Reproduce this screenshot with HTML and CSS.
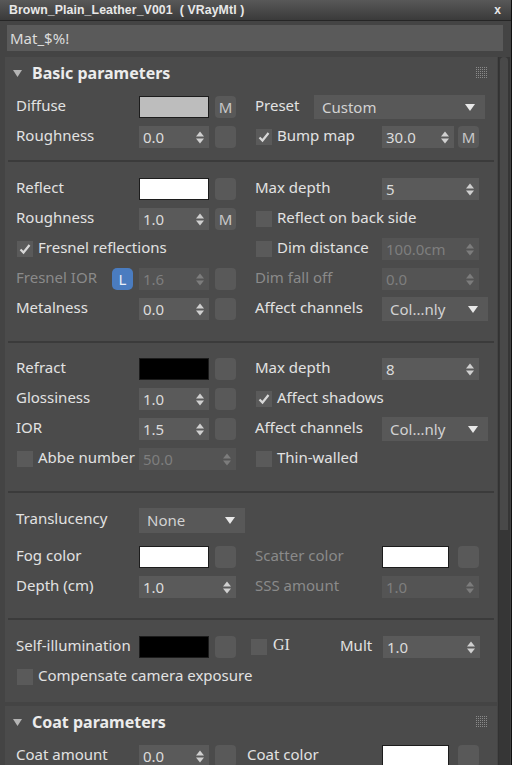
FILE: index.html
```html
<!DOCTYPE html>
<html>
<head>
<meta charset="utf-8">
<link rel="stylesheet" href="styles.css">
</head>
<body>
<svg class="defs" width="0" height="0">
  <defs>
    <symbol id="ud" viewBox="0 0 8 13"><path d="M0 5.5L4 0.5L8 5.5Z M0 7.5H8L4 12.5Z"/></symbol>
    <symbol id="dn" viewBox="0 0 10 7"><path d="M0 0H10L5 7Z"/></symbol>
    <symbol id="ck" viewBox="0 0 16 16"><path d="M3.5 8.5L6.5 11.5L12.5 4" fill="none" stroke-width="2.2"/></symbol>
    <symbol id="tri" viewBox="0 0 9 7"><path d="M0 0H9L4.5 7Z"/></symbol>
  </defs>
</svg>
<div class="win">
  <div class="title"><span>Brown_Plain_Leather_V001&nbsp; ( VRayMtl )</span><span class="close">x</span></div>
  <div class="name">Mat_$%!</div>
  <div class="main">
    <div class="panels">
      <div class="panel">
        <div class="phead"><svg class="tri"><use href="#tri"/></svg><span class="ptitle">Basic parameters</span><span class="grip"></span></div>

        <div class="sec s1">
          <div class="row">
            <div class="lc"><span class="lbl">Diffuse</span><span class="sw grey"></span><span class="mb">M</span></div>
            <div class="rc"><span class="plbl">Preset</span><span class="dd preset"><span>Custom</span><svg class="dna"><use href="#dn"/></svg></span></div>
          </div>
          <div class="row">
            <div class="lc"><span class="lbl">Roughness</span><span class="spin"><span>0.0</span><svg class="ud"><use href="#ud"/></svg></span><span class="mb"></span></div>
            <div class="rc"><span class="rlbl"><span class="cb"><svg><use href="#ck"/></svg></span>Bump map</span><span class="spin bump"><span>30.0</span><svg class="ud"><use href="#ud"/></svg></span><span class="mb mbr">M</span></div>
          </div>
        </div>

        <div class="sec s2">
          <div class="row">
            <div class="lc"><span class="lbl">Reflect</span><span class="sw white"></span><span class="mb"></span></div>
            <div class="rc"><span class="rlbl">Max depth</span><span class="spin wide"><span>5</span><svg class="ud"><use href="#ud"/></svg></span></div>
          </div>
          <div class="row">
            <div class="lc"><span class="lbl">Roughness</span><span class="spin"><span>1.0</span><svg class="ud"><use href="#ud"/></svg></span><span class="mb">M</span></div>
            <div class="rc"><span class="rlbl full"><span class="cb"></span>Reflect on back side</span></div>
          </div>
          <div class="row">
            <div class="lc"><span class="lbl full"><span class="cb first"><svg><use href="#ck"/></svg></span>Fresnel reflections</span></div>
            <div class="rc"><span class="rlbl"><span class="cb"></span>Dim distance</span><span class="spin wide dis"><span>100.0cm</span><svg class="ud"><use href="#ud"/></svg></span></div>
          </div>
          <div class="row">
            <div class="lc"><span class="lbl dis">Fresnel IOR<span class="lbtn">L</span></span><span class="spin dis"><span>1.6</span><svg class="ud"><use href="#ud"/></svg></span><span class="mb"></span></div>
            <div class="rc"><span class="rlbl dis">Dim fall off</span><span class="spin wide dis"><span>0.0</span><svg class="ud"><use href="#ud"/></svg></span></div>
          </div>
          <div class="row">
            <div class="lc"><span class="lbl">Metalness</span><span class="spin"><span>0.0</span><svg class="ud"><use href="#ud"/></svg></span><span class="mb"></span></div>
            <div class="rc"><span class="rlbl">Affect channels</span><span class="dd chan"><span>Col...nly</span><svg class="dna"><use href="#dn"/></svg></span></div>
          </div>
        </div>

        <div class="sec s3">
          <div class="row">
            <div class="lc"><span class="lbl">Refract</span><span class="sw black"></span><span class="mb"></span></div>
            <div class="rc"><span class="rlbl">Max depth</span><span class="spin wide"><span>8</span><svg class="ud"><use href="#ud"/></svg></span></div>
          </div>
          <div class="row">
            <div class="lc"><span class="lbl">Glossiness</span><span class="spin"><span>1.0</span><svg class="ud"><use href="#ud"/></svg></span><span class="mb"></span></div>
            <div class="rc"><span class="rlbl full"><span class="cb"><svg><use href="#ck"/></svg></span>Affect shadows</span></div>
          </div>
          <div class="row">
            <div class="lc"><span class="lbl">IOR</span><span class="spin"><span>1.5</span><svg class="ud"><use href="#ud"/></svg></span><span class="mb"></span></div>
            <div class="rc"><span class="rlbl">Affect channels</span><span class="dd chan"><span>Col...nly</span><svg class="dna"><use href="#dn"/></svg></span></div>
          </div>
          <div class="row">
            <div class="lc"><span class="lbl"><span class="cb first"></span>Abbe number</span><span class="spin wide dis"><span>50.0</span><svg class="ud"><use href="#ud"/></svg></span></div>
            <div class="rc"><span class="rlbl full"><span class="cb"></span>Thin-walled</span></div>
          </div>
        </div>

        <div class="sec s4">
          <div class="row">
            <div class="lc"><span class="lbl">Translucency</span><span class="dd none"><span>None</span><svg class="dna"><use href="#dn"/></svg></span></div>
            <div class="rc"></div>
          </div>
          <div class="row fog">
            <div class="lc"><span class="lbl">Fog color</span><span class="sw white"></span><span class="mb"></span></div>
            <div class="rc"><span class="rlbl dis">Scatter color</span><span class="sw white rsw"></span><span class="mb mbr2"></span></div>
          </div>
          <div class="row">
            <div class="lc"><span class="lbl">Depth (cm)</span><span class="spin wide"><span>1.0</span><svg class="ud"><use href="#ud"/></svg></span></div>
            <div class="rc"><span class="rlbl dis">SSS amount</span><span class="spin wide dis"><span>1.0</span><svg class="ud"><use href="#ud"/></svg></span></div>
          </div>
        </div>

        <div class="sec s5">
          <div class="row">
            <div class="lc self"><span class="lbl">Self-illumination</span><span class="sw black"></span><span class="mb"></span></div>
            <div class="rc"><span class="cb"></span><span class="gi">GI</span><span class="mult">Mult</span><span class="spin wide"><span>1.0</span><svg class="ud"><use href="#ud"/></svg></span></div>
          </div>
          <div class="row">
            <div class="lc"><span class="lbl full"><span class="cb first"></span>Compensate camera exposure</span></div>
            <div class="rc"></div>
          </div>
        </div>
      </div>

      <div class="panel coat">
        <div class="phead"><svg class="tri"><use href="#tri"/></svg><span class="ptitle">Coat parameters</span><span class="grip"></span></div>
        <div class="sec s6">
          <div class="row">
            <div class="lc coatl"><span class="lbl">Coat amount</span><span class="spin"><span>0.0</span><svg class="ud"><use href="#ud"/></svg></span><span class="mb"></span></div>
            <div class="rc"><span class="rlbl coatr">Coat color</span><span class="sw white rsw"></span><span class="mb mbr2"></span></div>
          </div>
        </div>
      </div>
    </div>
    <div class="scroll"><div class="thumb"></div></div>
  </div>
</div>
</body>
</html>
```

FILE: styles.css
```css
html, body {
  margin: 0;
  padding: 0;
  background: #444444;
}
.defs { position: absolute; width: 0; height: 0; }
.win {
  width: 511px;
  height: 765px;
  overflow: hidden;
  border-right: 1px solid #111;
  font-family: "Noto Sans", "Open Sans", sans-serif;
  font-size: 15px;
  color: #e2e2e2;
  background: #444444;
}
.title {
  height: 20px;
  border-bottom: 1px solid #262626;
  background: linear-gradient(#585858, #3a3a3a);
  display: flex;
  align-items: center;
  justify-content: space-between;
  padding: 0 10px 0 9px;
  font: bold 12.3px "Liberation Sans", Arial, sans-serif;
  letter-spacing: 0.1px;
  color: #e8e8e8;
}
.close { font-size: 12px; }
.name {
  margin: 4px 8px 0 7px;
  height: 26px;
  line-height: 26px;
  background: #5a5a5a;
  padding-left: 3px;
  color: #dcdcdc;
}
.main {
  display: flex;
  margin-top: 6px;
  height: 708px;
}
.panels {
  width: 492px;
  margin-left: 5px;
}
.panel {
  background: #4b4b4b;
}
.panel.coat {
  margin-top: 4px;
}
.scroll {
  width: 11px;
  margin-left: 1px;
  background: #363636;
  border-left: 1px solid #323232;
}
.thumb {
  height: 473px;
  margin: 0 2px 0 1px;
  background: #494949;
  border-radius: 4px 4px 0 0;
}
.phead {
  height: 35px;
  display: flex;
  align-items: center;
  padding: 0 9px 3px 8px;
  box-sizing: border-box;
}
.tri {
  width: 9px;
  height: 7px;
  fill: #b4b4b4;
}
.ptitle {
  margin-left: 10px;
  font-weight: bold;
  font-size: 16px;
  color: #ececec;
}
.grip {
  margin-left: auto;
  width: 12px;
  height: 12px;
  background:
    linear-gradient(90deg, transparent 50%, #4b4b4b 50%) 0 0 / 2px 2px,
    linear-gradient(transparent 50%, #4b4b4b 50%) 0 0 / 2px 2px,
    #8a8a8a;
}
.sec {
  margin: 0 3px;
  border-bottom: 2px solid #3b3b3b;
}
.s1 { padding: 0 0 8px; }
.s2 { padding: 12px 0 17px; }
.s3 { padding: 11px 0 17px; }
.s4 { padding: 12px 0 16px; }
.s5 { padding: 12px 0 10px; border-bottom: none; }
.s6 { padding: 0; border-bottom: none; }
.row {
  display: flex;
  align-items: center;
  height: 30px;
}
.row.fog { margin-top: 7px; }
.lc {
  width: 247px;
  padding-left: 8px;
  box-sizing: border-box;
  display: flex;
  align-items: center;
  flex: none;
}
.lc.self { width: 242px; }
.lc.coatl { width: 239px; }
.rc {
  display: flex;
  align-items: center;
  flex: 1;
}
.lbl, .rlbl, .plbl, .mult, .gi {
  padding-bottom: 4px;
}
.lbl {
  width: 123px;
  flex: none;
  display: flex;
  align-items: center;
  white-space: nowrap;
}
.lbl.full, .rlbl.full { width: auto; }
.rlbl {
  width: 127px;
  flex: none;
  display: flex;
  align-items: center;
  white-space: nowrap;
}
.rlbl.coatr { width: 135px; }
.plbl { width: 59px; flex: none; }
.dis { color: #8a8a8a; }
.sw {
  width: 70px;
  height: 22px;
  box-sizing: border-box;
  border: 1px solid #1c1c1c;
  flex: none;
}
.sw.rsw { width: 67px; }
.grey { background: #bdbdbd; }
.white { background: #ffffff; }
.black { background: #000000; }
.mb {
  width: 21px;
  height: 22px;
  margin-left: 6px;
  border-radius: 4px;
  background: #595959;
  color: #c8c8c8;
  font-size: 15px;
  display: flex;
  align-items: center;
  justify-content: center;
  flex: none;
}
.mb.mbr { margin-left: 4px; }
.mb.mbr2 { margin-left: 9px; }
.spin {
  width: 70px;
  height: 22px;
  box-sizing: border-box;
  padding: 0 5px 0 4px;
  background: #5a5a5a;
  display: flex;
  align-items: center;
  justify-content: space-between;
  color: #dcdcdc;
  flex: none;
}
.spin.wide { width: 97px; }
.spin.bump { width: 72px; }
.spin.dis { background: #545454; color: #7e7e7e; }
.ud {
  width: 8px;
  height: 13px;
  fill: #d0d0d0;
}
.spin.dis .ud { fill: #7c7c7c; }
.dd {
  height: 24px;
  box-sizing: border-box;
  background: #585858;
  display: flex;
  align-items: center;
  justify-content: space-between;
  padding: 0 10px 0 8px;
  color: #d2d2d2;
  flex: none;
}
.dd.preset { width: 171px; }
.dd.chan { width: 106px; }
.dd.none { width: 106px; height: 25px; }
.dna {
  width: 10px;
  height: 7px;
  fill: #e8e8e8;
}
.cb {
  width: 16px;
  height: 16px;
  background: #5a5a5a;
  margin: 0 5px 0 1px;
  flex: none;
  display: flex;
}
.lbl .cb, .rlbl .cb { margin-top: 4px; }
.cb svg {
  width: 16px;
  height: 16px;
  stroke: #d8d8d8;
}
.lbtn {
  margin: 4px 6px 0 auto;
  width: 21px;
  height: 22px;
  border-radius: 5px;
  background: #4a7cc0;
  color: #e8eef8;
  display: flex;
  align-items: center;
  justify-content: center;
  font-size: 15px;
}
.gi {
  width: 67px;
  margin-left: 1px;
  font-family: "Liberation Serif", serif;
  font-size: 16px;
}
.mult { width: 43px; flex: none; }
```
